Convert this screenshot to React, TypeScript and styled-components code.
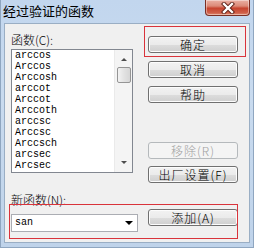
import React from 'react';
import styled, { createGlobalStyle } from 'styled-components';

const GlobalStyle = createGlobalStyle`
  html, body {
    margin: 0;
    padding: 0;
    background: #c4d7ec;
  }
`;

const CJK = `"Noto Sans CJK SC", "Noto Sans", sans-serif`;

const Window = styled.div`
  width: 254px;
  height: 248px;
  box-sizing: border-box;
  background: linear-gradient(#c2d6ee, #c9dbef 40%, #bfd3ea);
  border-left: 1px solid #8fa6c0;
  border-right: 1px solid #8fa6c0;
  border-bottom: 1px solid #8fa6c0;
  display: flex;
  flex-direction: column;
  overflow: hidden;
`;

const TitleBar = styled.div`
  height: 23px;
  display: flex;
  align-items: flex-start;
  justify-content: space-between;
  padding: 0 3px 0 2px;
`;

const Title = styled.div`
  font-family: ${CJK};
  font-size: 13px;
  line-height: 16px;
  margin-top: 3px;
  color: #000;
`;

const CloseButton = styled.div`
  width: 45px;
  height: 16px;
  box-sizing: border-box;
  border: 1px solid #7a2e24;
  border-top: none;
  border-radius: 0 0 4px 4px;
  background: linear-gradient(#eab0a4, #dc8a78 40%, #c7442f 55%, #cf5f49 85%, #e08a70);
  box-shadow: inset 0 0 0 1px rgba(255, 255, 255, 0.4);
  display: flex;
  align-items: center;
  justify-content: center;
`;

const Client = styled.div`
  position: relative;
  margin-left: 3px;
  width: 246px;
  height: 220px;
  box-sizing: border-box;
  background: #f0f0f0;
  border: 1px solid #9aaec4;
  display: flex;
`;

const LeftColumn = styled.div`
  display: flex;
  flex-direction: column;
  padding-left: 6px;
  width: 127px;
`;

const Label = styled.div<{ $mt: number }>`
  font-family: ${CJK};
  font-size: 12px;
  font-weight: 300;
  line-height: 14px;
  height: 14px;
  margin-top: ${({ $mt }) => $mt}px;
  color: #000;
`;

const ListBox = styled.div`
  margin-top: 2px;
  width: 122px;
  height: 124px;
  box-sizing: border-box;
  border: 1px solid #828790;
  background: #fff;
  display: flex;
`;

const Items = styled.div`
  flex: 1;
  padding: 0 0 0 3px;
  overflow: hidden;
`;

const Item = styled.div`
  font-family: "Liberation Mono", monospace;
  font-size: 10px;
  line-height: 11px;
  height: 11px;
  color: #000;
`;

const ScrollBar = styled.div`
  width: 17px;
  display: flex;
  flex-direction: column;
  align-items: center;
  background: #f4f4f4;
  border-left: 1px solid #eaeaea;
`;

const Arrow = styled.div<{ $down?: boolean }>`
  width: 0;
  height: 0;
  margin: ${({ $down }) => ($down ? 'auto 0 8px' : '8px 0 0')};
  border-left: 3px solid transparent;
  border-right: 3px solid transparent;
  ${({ $down }) =>
    $down ? 'border-top: 3px solid #4d4d4d;' : 'border-bottom: 3px solid #4d4d4d;'}
`;

const Thumb = styled.div`
  margin-top: 6px;
  width: 14px;
  height: 16px;
  box-sizing: border-box;
  border: 1px solid #959595;
  border-radius: 2px;
  background: linear-gradient(90deg, #f3f3f3, #e2e2e2 50%, #d6d6d6);
`;

const Combo = styled.div`
  margin-top: 7px;
  width: 127px;
  height: 18px;
  box-sizing: border-box;
  border: 1px solid #abadb3;
  background: #fff;
  display: flex;
  align-items: center;
  padding: 0 3px 0 3px;
`;

const ComboText = styled.div`
  flex: 1;
  font-family: "Liberation Mono", monospace;
  font-size: 10px;
  line-height: 12px;
  color: #000;
`;

const ComboArrow = styled.div`
  width: 0;
  height: 0;
  margin-right: 1px;
  border-left: 4px solid transparent;
  border-right: 4px solid transparent;
  border-top: 4px solid #000;
`;

const RightColumn = styled.div`
  display: flex;
  flex-direction: column;
  margin-left: 10px;
`;

const Button = styled.div<{ $mt: number; $disabled?: boolean }>`
  margin-top: ${({ $mt }) => $mt}px;
  width: 90px;
  height: 17px;
  box-sizing: border-box;
  border: 1px solid ${({ $disabled }) => ($disabled ? '#b5b9bc' : '#707070')};
  border-radius: 3px;
  background: ${({ $disabled }) =>
    $disabled ? '#f4f4f4' : 'linear-gradient(#f2f2f2, #ebebeb 50%, #dddddd 51%, #cfcfcf)'};
  box-shadow: inset 0 0 0 1px ${({ $disabled }) => ($disabled ? '#f4f4f4' : '#fcfcfc')};
  display: flex;
  align-items: center;
  justify-content: center;
  font-family: ${CJK};
  font-size: 12px;
  font-weight: 300;
  line-height: 14px;
  letter-spacing: 1px;
  color: ${({ $disabled }) => ($disabled ? '#a0a0a0' : '#000')};
`;

const Mark = styled.div<{ $x: number; $y: number; $w: number; $h: number }>`
  position: absolute;
  left: ${({ $x }) => $x}px;
  top: ${({ $y }) => $y}px;
  width: ${({ $w }) => $w}px;
  height: ${({ $h }) => $h}px;
  box-sizing: border-box;
  border: 1px solid #d9333b;
  pointer-events: none;
`;

const functions = [
  'arccos',
  'Arccos',
  'Arccosh',
  'arccot',
  'Arccot',
  'Arccoth',
  'arccsc',
  'Arccsc',
  'Arccsch',
  'arcsec',
  'Arcsec',
];

const CloseIcon = () => (
  <svg width="14" height="12" viewBox="0 0 14 12">
    <path d="M3 2 L11 10 M11 2 L3 10" stroke="#5b1d14" strokeWidth="4.2" strokeLinecap="square" />
    <path d="M3 2 L11 10 M11 2 L3 10" stroke="#fff" strokeWidth="2.4" strokeLinecap="square" />
  </svg>
);

export default function App() {
  return (
    <>
      <GlobalStyle />
      <Window>
        <TitleBar>
          <Title>经过验证的函数</Title>
          <CloseButton>
            <CloseIcon />
          </CloseButton>
        </TitleBar>
        <Client>
          <LeftColumn>
            <Label $mt={9}>函数(C):</Label>
            <ListBox>
              <Items>
                {functions.map((f, i) => (
                  <Item key={i}>{f}</Item>
                ))}
              </Items>
              <ScrollBar>
                <Arrow />
                <Thumb />
                <Arrow $down />
              </ScrollBar>
            </ListBox>
            <Label $mt={20}>新函数(N):</Label>
            <Combo>
              <ComboText>san</ComboText>
              <ComboArrow />
            </Combo>
          </LeftColumn>
          <RightColumn>
            <Button $mt={12}>确定</Button>
            <Button $mt={8}>取消</Button>
            <Button $mt={8}>帮助</Button>
            <Button $mt={39} $disabled>移除(R)</Button>
            <Button $mt={7}>出厂设置(F)</Button>
            <Button $mt={26}>添加(A)</Button>
          </RightColumn>
          <Mark $x={139} $y={2} $w={102} $h={31} />
          <Mark $x={4} $y={180} $w={229} $h={35} />
        </Client>
      </Window>
    </>
  );
}
